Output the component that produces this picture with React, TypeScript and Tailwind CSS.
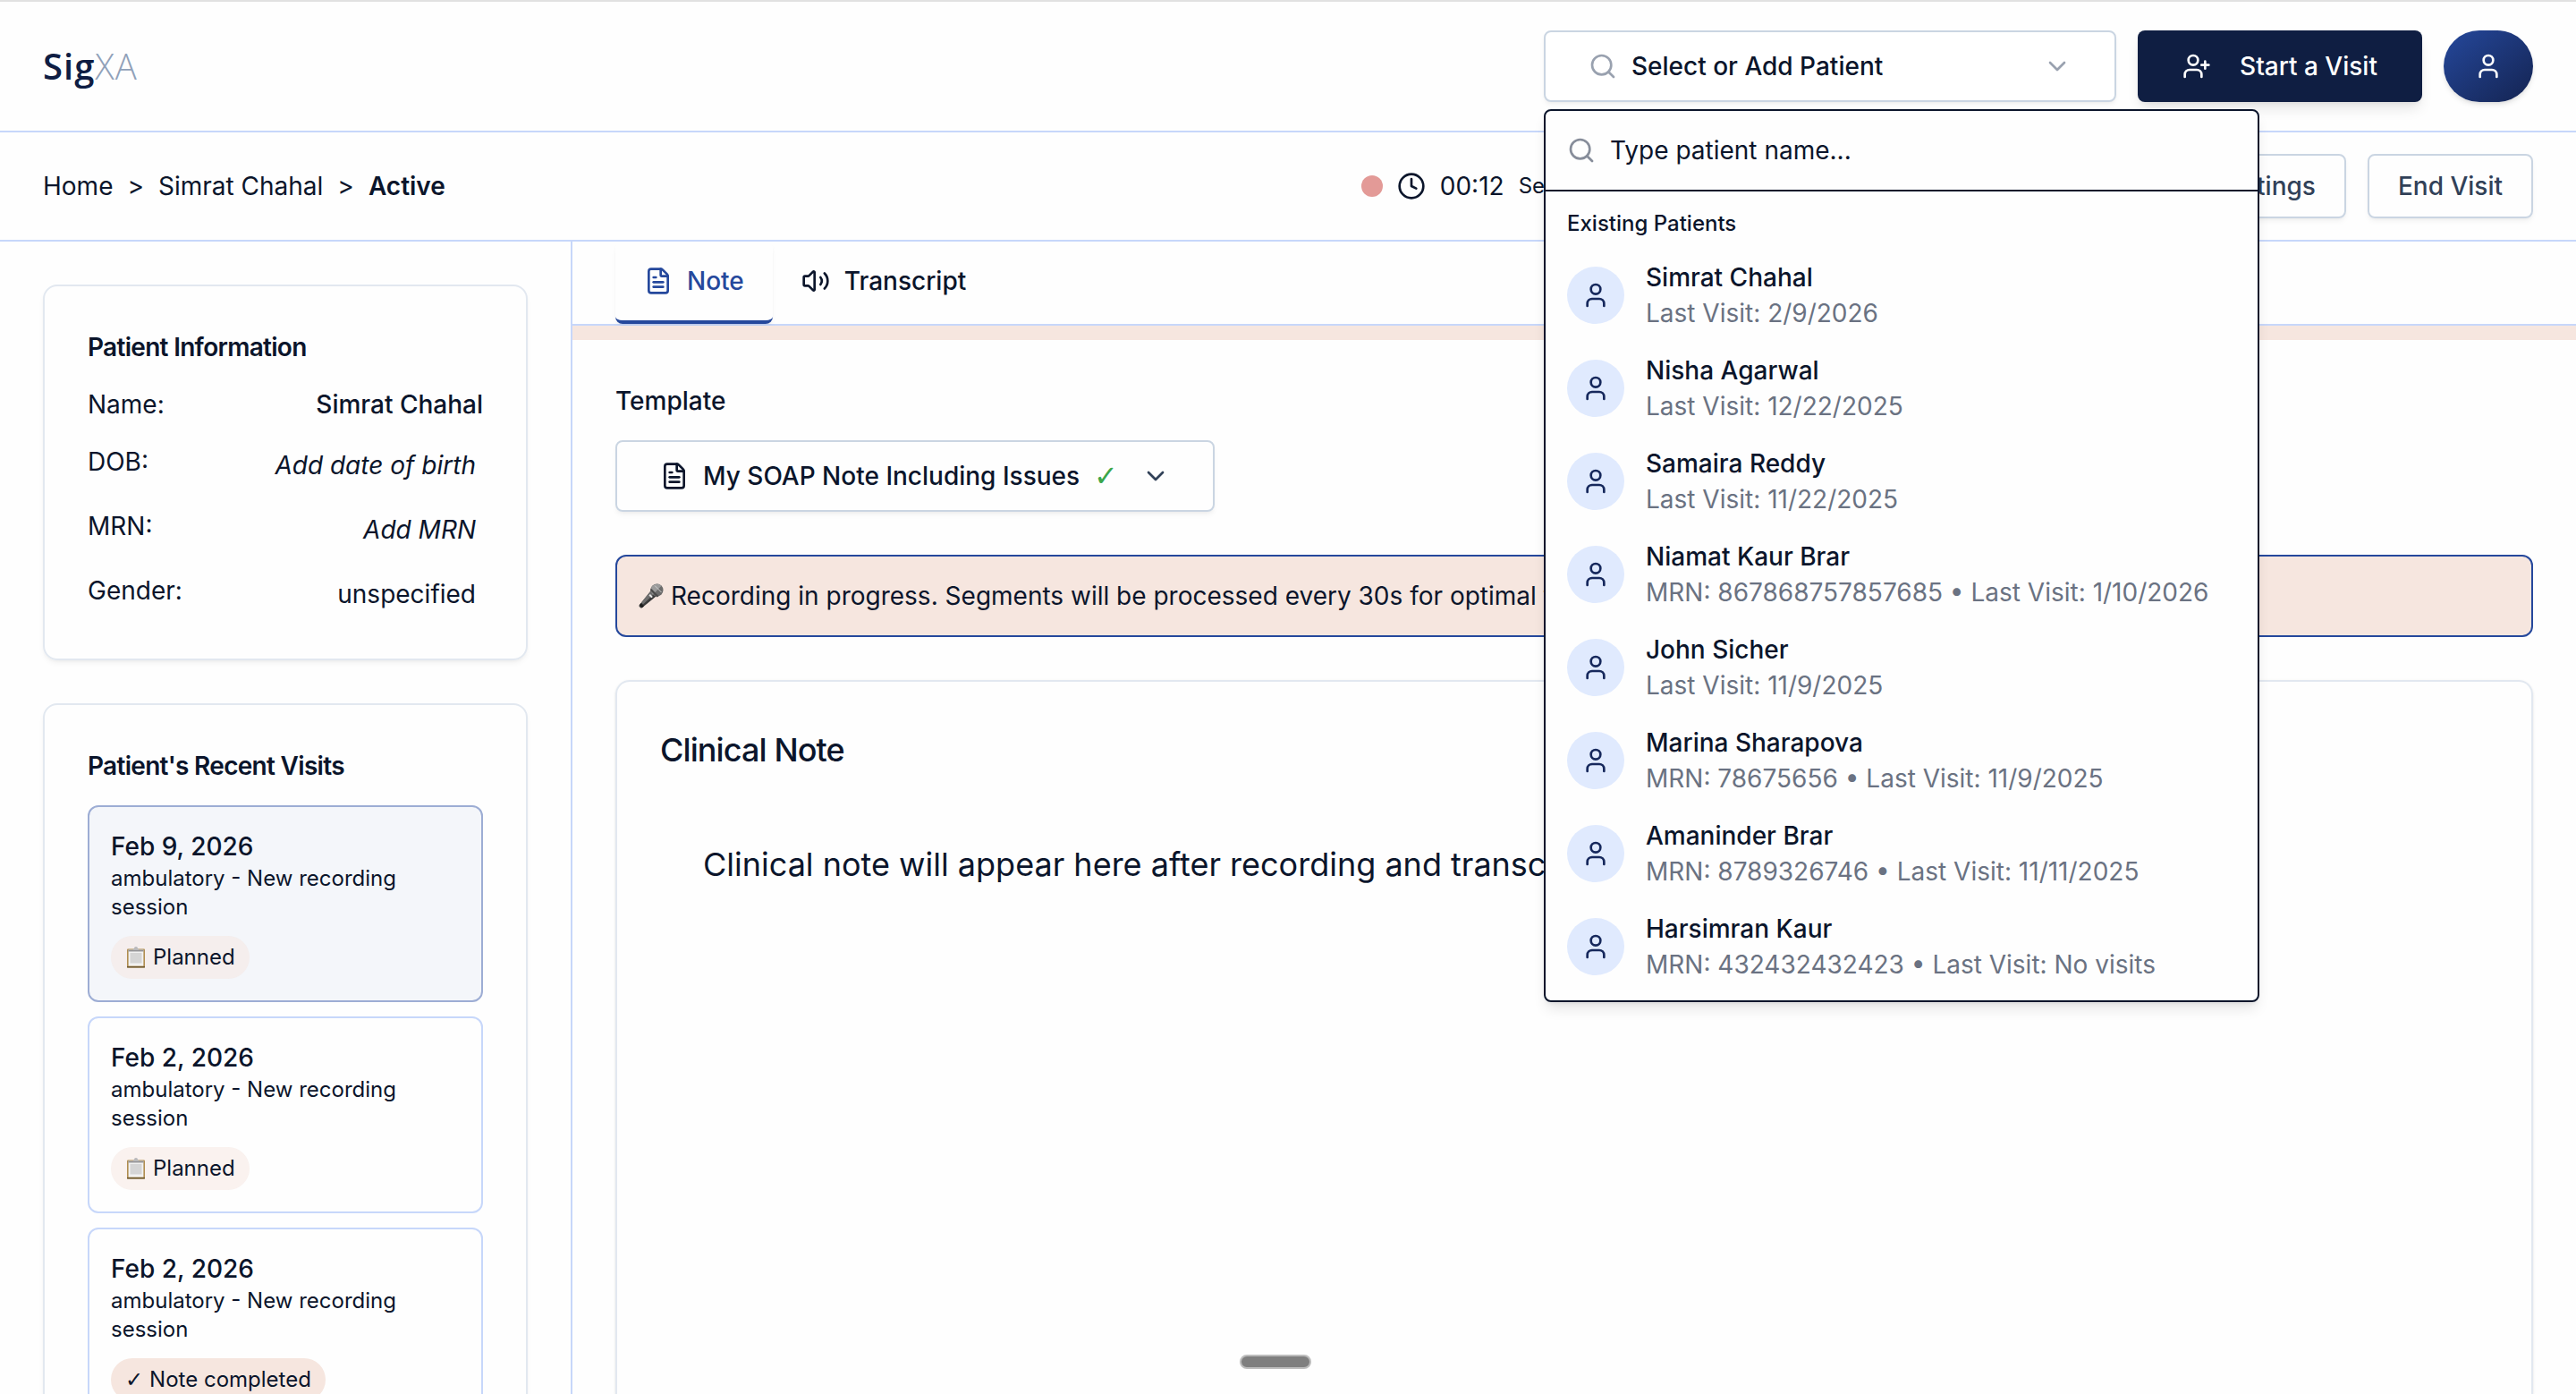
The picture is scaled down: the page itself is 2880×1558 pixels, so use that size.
import { useState } from 'react';
import { ChevronDown, Clock, FileText, Search, User, UserPlus, Volume2 } from 'lucide-react';

type Patient = { name: string; mrn?: string; lastVisit: string };
type Visit = { date: string; summary: string; status: 'planned' | 'completed'; active?: boolean };

const PATIENTS: Patient[] = [
  { name: 'Simrat Chahal', lastVisit: '2/9/2026' },
  { name: 'Nisha Agarwal', lastVisit: '12/22/2025' },
  { name: 'Samaira Reddy', lastVisit: '11/22/2025' },
  { name: 'Niamat Kaur Brar', mrn: '867868757857685', lastVisit: '1/10/2026' },
  { name: 'John Sicher', lastVisit: '11/9/2025' },
  { name: 'Marina Sharapova', mrn: '78675656', lastVisit: '11/9/2025' },
  { name: 'Amaninder Brar', mrn: '8789326746', lastVisit: '11/11/2025' },
  { name: 'Harsimran Kaur', mrn: '432432432423', lastVisit: 'No visits' },
];

const VISITS: Visit[] = [
  { date: 'Feb 9, 2026', summary: 'ambulatory - New recording session', status: 'planned', active: true },
  { date: 'Feb 2, 2026', summary: 'ambulatory - New recording session', status: 'planned' },
  { date: 'Feb 2, 2026', summary: 'ambulatory - New recording session', status: 'completed' },
];

function ClipboardIcon() {
  return (
    <svg viewBox="0 0 24 24" className="size-6 shrink-0" aria-hidden="true">
      <rect x="2" y="2.5" width="20" height="21" rx="1" fill="#b08d4f" />
      <rect x="2" y="22" width="20" height="1.5" fill="#6f5a33" />
      <rect x="3.6" y="4" width="16.8" height="17.6" fill="#f1f1f1" />
      <rect x="5.5" y="7" width="13" height="11.5" fill="#d5d5d5" />
      <path d="M3.5 5V3.2h5.2L10 1.8a2 1.8 0 0 1 4 0l1.3 1.4h5.2V5z" fill="#b9b9bb" />
      <rect x="3.5" y="4.2" width="17" height="1.2" fill="#8b8b8d" />
    </svg>
  );
}

function MicIcon() {
  return (
    <svg viewBox="0 0 28 28" className="size-7 shrink-0" aria-hidden="true">
      <path d="M13.5 8.5.8 24.2c-.5.7-.4 1.4.2 2l.8.8c.6.6 1.4.7 2 .2L19.5 14.5z" fill="#3b3b3b" />
      <path d="M13.5 8.5 3 21.5l2 2L17 12z" fill="#6e6e6e" />
      <path d="M11.5 13.5l2.8 2.8 1.5-1.3-2.9-2.9z" fill="#e8e8e8" />
      <path d="M.8 24.2l3 3L6 25.4 2.5 22z" fill="#1f1f1f" />
      <circle cx="20.5" cy="7.5" r="7" fill="#6b6b6b" />
      <path d="M15 3.2a7 7 0 0 1 10.5-.4L16 12.5A7 7 0 0 1 15 3.2z" fill="#9a9a9a" />
      <path d="M13.8 5.5l8.7 8.7-2 1.3-7.5-7.5z" fill="#4a4a4a" />
      <path d="M18 2.5l7.5 7.5" stroke="#d0d0d0" strokeWidth="1" />
    </svg>
  );
}

function PatientSelect() {
  const [query, setQuery] = useState('');
  const matches = PATIENTS.filter((p) => p.name.toLowerCase().includes(query.toLowerCase()));

  return (
    <div className="relative w-[640px]">
      <button
        type="button"
        aria-expanded="true"
        className="flex h-20 w-full items-center gap-4 rounded-lg border-2 border-slate-300 bg-white px-12 font-medium shadow-md shadow-black/5"
      >
        <Search className="size-8 text-gray-400" />
        <span className="flex-1 text-left">Select or Add Patient</span>
        <ChevronDown className="size-8 text-gray-400" />
      </button>

      <div className="absolute left-0 top-full z-20 mt-2 w-[800px] overflow-hidden rounded-lg border-2 border-[#0b152b] bg-[#fefefe] shadow-lg">
        <label className="flex h-[90px] items-center gap-4 border-b-2 border-[#0b152b] px-6">
          <Search className="size-8 shrink-0 text-gray-500 opacity-80" />
          <input
            type="text"
            aria-label="Patient name"
            placeholder="Type patient name..."
            value={query}
            onChange={(e) => setQuery(e.target.value)}
            className="w-full bg-transparent outline-none placeholder:text-[#0b152b]"
          />
        </label>
        <div className="p-2">
          <h2 className="px-4 py-3 text-[24px] font-medium leading-8">Existing Patients</h2>
          <ul>
            {matches.map((patient) => (
              <li key={patient.name}>
                <button type="button" className="flex w-full items-center gap-6 px-4 py-3 text-left">
                  <span className="flex size-16 shrink-0 items-center justify-center rounded-full bg-[#e0eafe]">
                    <User className="size-8 text-[#16285c]" />
                  </span>
                  <span className="flex flex-col">
                    <span className="font-medium">{patient.name}</span>
                    <span className="text-gray-500">
                      {patient.mrn ? `MRN: ${patient.mrn} • ` : ''}Last Visit: {patient.lastVisit}
                    </span>
                  </span>
                </button>
              </li>
            ))}
          </ul>
        </div>
      </div>
    </div>
  );
}

function Header() {
  return (
    <header className="flex items-center justify-between border-b-2 border-t-2 border-b-[#c7d7fa] border-t-[#e1e1e1] px-12 py-8">
      <a href="#home" className="font-['Open_Sans',sans-serif] text-[40px] leading-[56px] tracking-wide">
        <span className="font-semibold text-[#0f1d43]">Sig</span>
        <span className="font-light text-slate-400">XA</span>
      </a>
      <div className="flex items-center gap-6">
        <PatientSelect />
        <button
          type="button"
          className="flex h-20 w-[318px] items-center justify-center gap-8 rounded-lg bg-[#0f1e42] font-medium text-white shadow-lg"
        >
          <UserPlus className="size-8" />
          Start a Visit
        </button>
        <button
          type="button"
          aria-label="Account"
          className="flex h-20 w-[100px] items-center justify-center rounded-full bg-gradient-to-br from-[#25489c] to-[#142452] text-white shadow-md"
        >
          <User className="size-8" />
        </button>
      </div>
    </header>
  );
}

function VisitBar() {
  return (
    <div className="flex items-center justify-between border-b-2 border-[#c7d7fa] px-12 py-6">
      <nav aria-label="Breadcrumb" className="flex items-center gap-4">
        <a href="#home">Home</a>
        <span>&gt;</span>
        <a href="#patient">Simrat Chahal</a>
        <span>&gt;</span>
        <span className="font-semibold">Active</span>
      </nav>
      <div className="flex items-center gap-6">
        <div className="flex w-[900px] items-center gap-4">
          <span className="size-6 rounded-full bg-[#e39a97]" />
          <Clock className="size-8" />
          <span>00:12</span>
          <span className="text-[24px]">Segment 1</span>
        </div>
        <button
          type="button"
          className="h-[72px] rounded-lg border-2 border-slate-300 px-8 font-medium text-slate-700 shadow-md shadow-black/5"
        >
          Settings
        </button>
        <button
          type="button"
          className="h-[72px] rounded-lg border-2 border-slate-300 px-8 font-medium text-slate-700 shadow-md shadow-black/5"
        >
          End Visit
        </button>
      </div>
    </div>
  );
}

function InfoRow({ label, value, missing }: { label: string; value: string; missing?: boolean }) {
  return (
    <div className="flex items-start justify-between">
      <dt>{label}</dt>
      <dd className={missing ? 'px-2 py-1 italic' : 'px-2 py-1'}>{value}</dd>
    </div>
  );
}

function VisitCard({ visit }: { visit: Visit }) {
  const planned = visit.status === 'planned';

  return (
    <li
      className={
        visit.active
          ? 'rounded-xl border-2 border-[#9dadd4] bg-[#f4f6fa] p-6'
          : 'rounded-xl border-2 border-[#c7d7fa] p-6'
      }
    >
      <h3 className="font-medium">{visit.date}</h3>
      <p className="text-[24px] leading-8">{visit.summary}</p>
      <span
        className={
          planned
            ? 'mt-4 flex h-12 w-fit items-center gap-[7px] rounded-full bg-[#f6e6df]/50 px-4 text-[24px]'
            : 'mt-4 flex h-12 w-fit items-center gap-[7px] rounded-full bg-[#f6e6df] px-4 text-[24px]'
        }
      >
        {planned ? <ClipboardIcon /> : <span className="font-['DejaVu_Sans',sans-serif] font-bold">✓</span>}
        {planned ? 'Planned' : 'Note completed'}
      </span>
    </li>
  );
}

function Sidebar() {
  return (
    <aside className="flex w-[640px] shrink-0 flex-col gap-12 overflow-hidden border-r-2 border-[#c7d7fa] p-12">
      <section className="shrink-0 rounded-2xl border-2 border-slate-200 p-12 shadow-md shadow-black/5">
        <h2 className="mb-6 font-semibold tracking-tight">Patient Information</h2>
        <dl className="flex flex-col gap-6">
          <div className="flex justify-between">
            <dt>Name:</dt>
            <dd className="font-medium">Simrat Chahal</dd>
          </div>
          <InfoRow label="DOB:" value="Add date of birth" missing />
          <InfoRow label="MRN:" value="Add MRN" missing />
          <InfoRow label="Gender:" value="unspecified" />
        </dl>
      </section>

      <section className="shrink-0 rounded-2xl border-2 border-slate-200 p-12 shadow-md shadow-black/5">
        <h2 className="mb-6 font-semibold tracking-tight">Patient's Recent Visits</h2>
        <ul className="flex flex-col gap-4">
          {VISITS.map((visit, i) => (
            <VisitCard key={i} visit={visit} />
          ))}
        </ul>
      </section>
    </aside>
  );
}

function NotePanel() {
  return (
    <main className="flex min-w-0 flex-1 flex-col">
      <div role="tablist" className="flex border-b-2 border-[#c7d7fa] px-12">
        <button
          type="button"
          role="tab"
          aria-selected="true"
          className="flex items-center gap-4 rounded-lg border-b-4 border-[#25489c] px-8 py-6 font-medium text-[#25489c] shadow-md shadow-black/5"
        >
          <FileText className="size-8" />
          Note
        </button>
        <button
          type="button"
          role="tab"
          aria-selected="false"
          className="flex items-center gap-4 border-b-4 border-transparent px-8 py-6 font-medium"
        >
          <Volume2 className="size-8" />
          Transcript
        </button>
      </div>
      <div className="h-4 shrink-0 bg-[#f6e6df]" />

      <div className="flex flex-1 flex-col gap-12 p-12 pb-0">
        <div className="flex flex-col items-start gap-6">
          <span id="template-label" className="font-medium">Template</span>
          <button
            type="button"
            aria-labelledby="template-label"
            className="flex h-20 w-[670px] items-center gap-4 rounded-lg border-2 border-slate-300 px-12 font-medium shadow-md shadow-black/5"
          >
            <FileText className="size-8" />
            My SOAP Note Including Issues
            <span className="font-['DejaVu_Sans',sans-serif] text-[32px] font-bold text-[#3aa64a]">✓</span>
            <ChevronDown className="ml-auto size-8 text-slate-700" />
          </button>
        </div>

        <div className="flex items-center gap-2 rounded-xl border-2 border-[#25489c] bg-[#f6e6df] p-6">
          <MicIcon />
          <p>Recording in progress. Segments will be processed every 30s for optimal transcription.</p>
        </div>

        <section className="flex-1 rounded-t-2xl border-2 border-b-0 border-slate-200 p-12 shadow-sm">
          <h2 className="text-[36px] font-medium leading-[56px] tracking-tight">Clinical Note</h2>
          <p className="p-12 pt-[72px] text-[36px] leading-[56px]">
            Clinical note will appear here after recording and transcription.
          </p>
        </section>
      </div>
    </main>
  );
}

export default function App() {
  return (
    <div className="relative flex h-screen flex-col overflow-hidden bg-[#fefefe] font-['Inter',sans-serif] text-[28px] leading-10 text-[#0b152b]">
      <Header />
      <VisitBar />
      <div className="flex min-h-0 flex-1">
        <Sidebar />
        <NotePanel />
      </div>
      <div className="absolute bottom-7 left-1/2 -ml-[54px] h-4 w-20 rounded-full border-2 border-[#bdbdbd] bg-[#7f7f7f]" />
    </div>
  );
}
